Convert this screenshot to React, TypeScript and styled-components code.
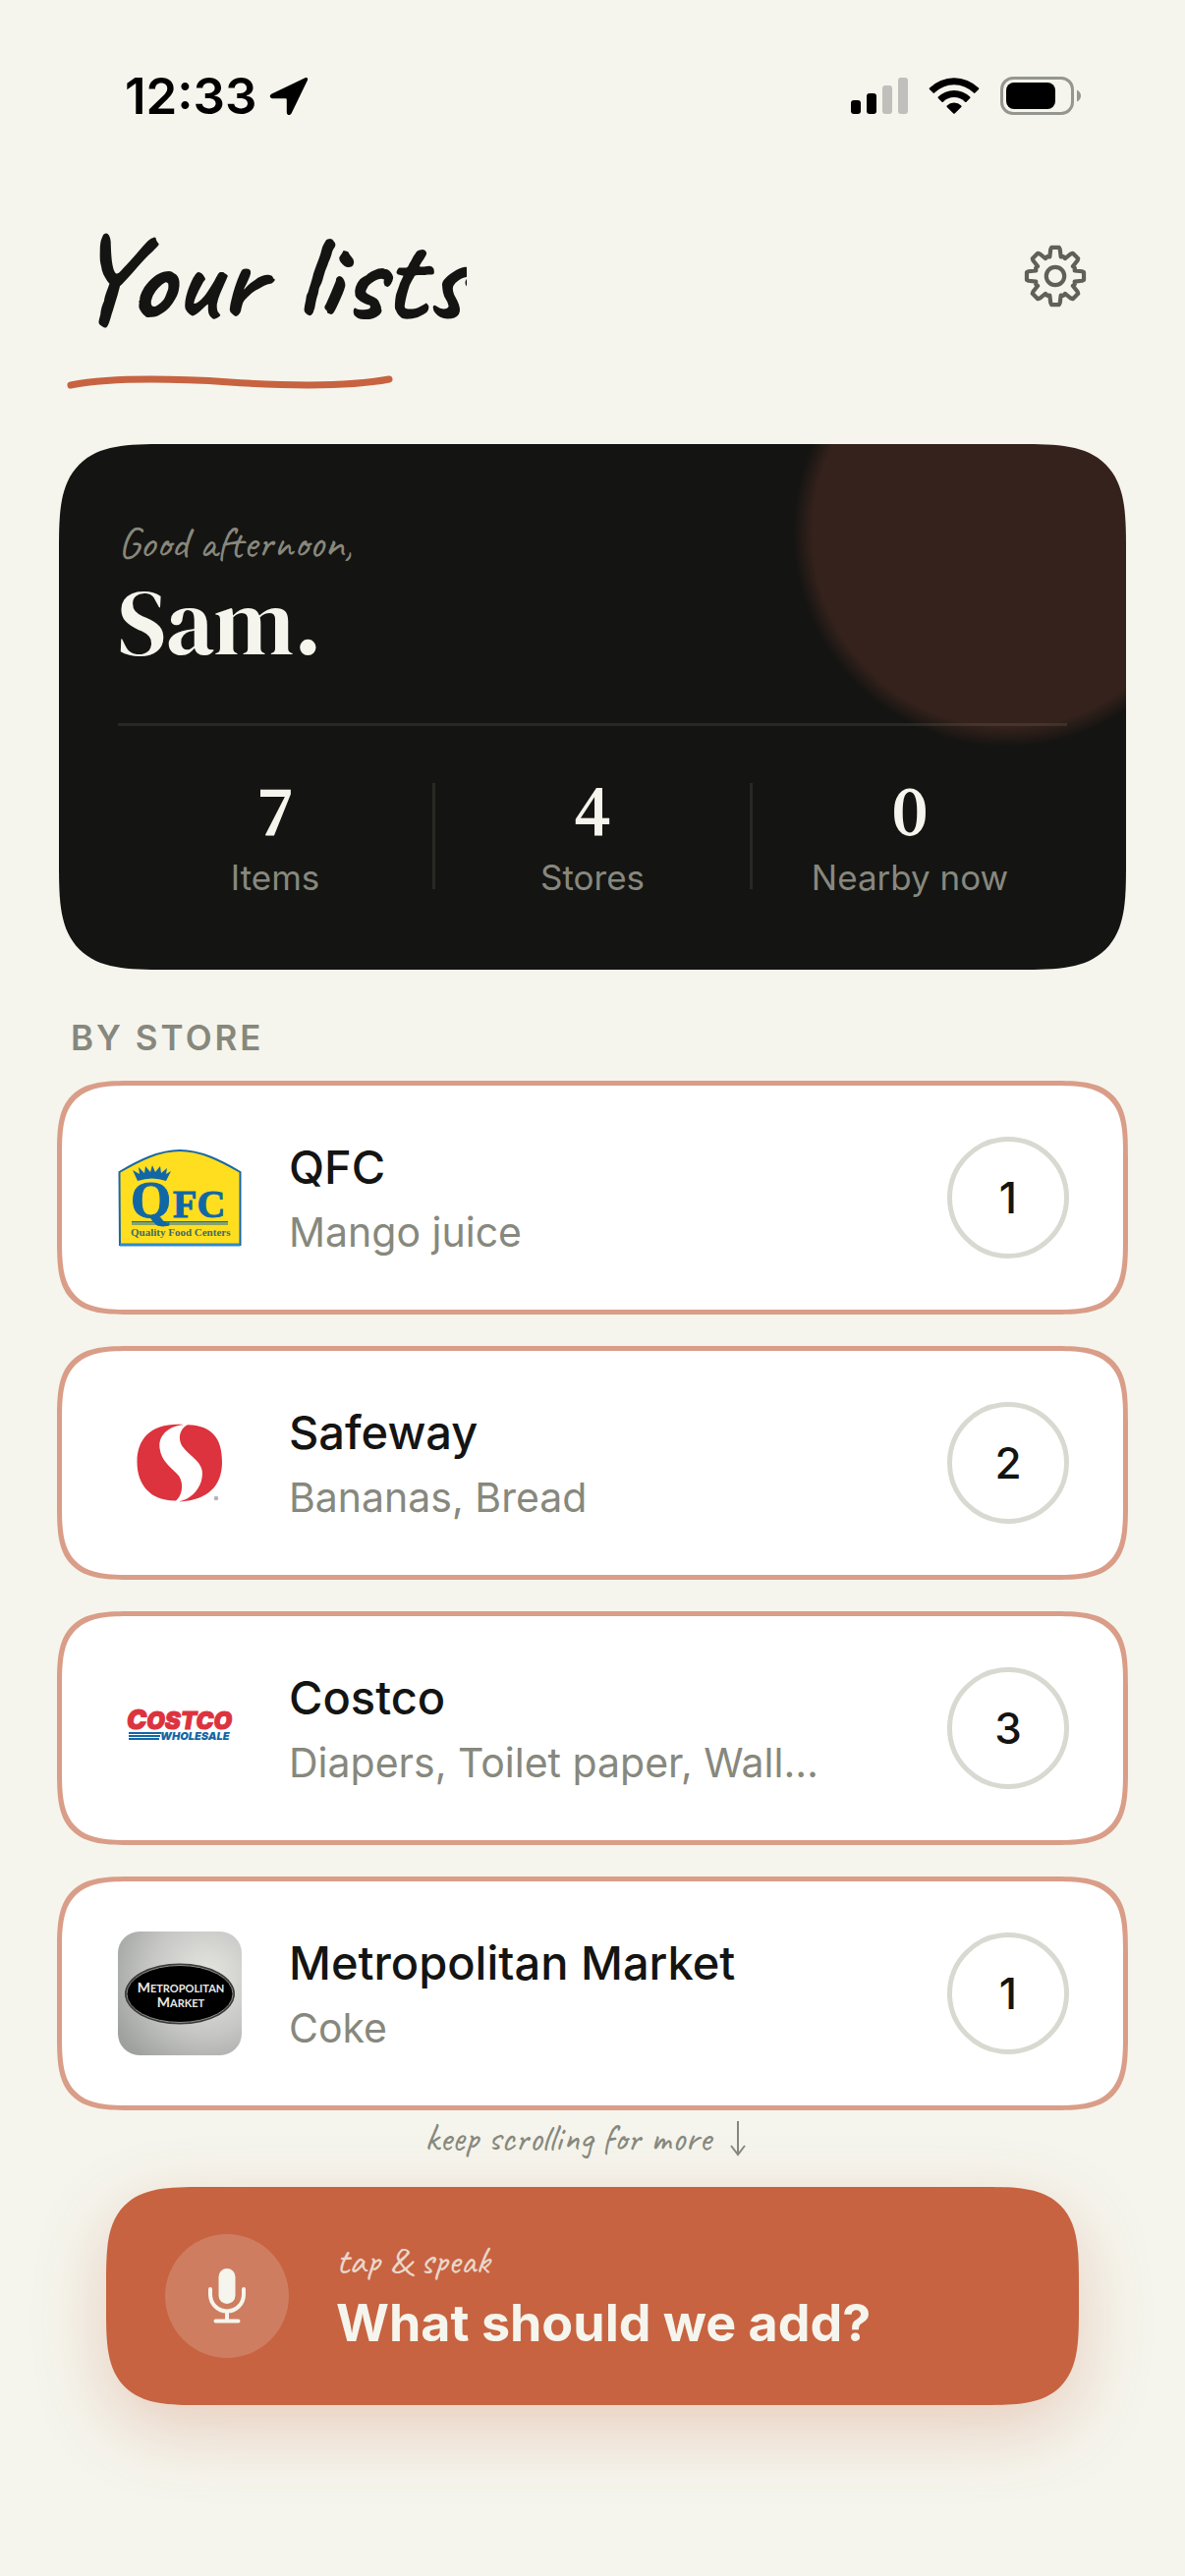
import React from "react";
import styled, { createGlobalStyle, css } from "styled-components";

const color = {
  paper: "#f5f5ed",
  ink: "#141412",
  muted: "#87887d",
  clay: "#c76341",
  clayLine: "#d99d88",
  ring: "#d8d9d0",
};

const sans = `Inter, "Liberation Sans", sans-serif`;
const serif = `"DM Serif Display", "Liberation Serif", serif`;
const numerals = `"New York", "Source Serif 4", "Source Serif Pro", "Noto Serif", "DM Serif Display", serif`;
const hand = `Caveat, Lato, cursive`;

const GlobalStyle = createGlobalStyle`
  *, *::before, *::after { box-sizing: border-box; }
  body { margin: 0; background: ${color.paper}; }
  button { font: inherit; color: inherit; border: 0; background: none; padding: 0; text-align: left; cursor: pointer; }
  h1, h2, h3, p, ul { margin: 0; padding: 0; }
  svg { display: block; flex: none; }
`;

/* Continuous corners where the browser has them, plain round ones elsewhere. */
const smoothCorner = (plain: number, smooth: number) => css`
  border-radius: ${plain}px;
  @supports (corner-shape: superellipse(1.7)) {
    border-radius: ${smooth}px;
    corner-shape: superellipse(1.7);
  }
`;

const Page = styled.div`
  min-height: 100vh;
  background: ${color.paper};
  color: ${color.ink};
  font-family: ${sans};
  display: flex;
  flex-direction: column;
`;

const StatusBar = styled.div`
  display: flex;
  align-items: center;
  justify-content: space-between;
  padding: 67px 106px 0 127px;
  color: #000;
`;

const StatusGroup = styled.div<{ $gap: number }>`
  display: flex;
  align-items: center;
  gap: ${(p) => p.$gap}px;
`;

const Clock = styled.time`
  font-size: 51px;
  font-weight: 600;
  line-height: 62px;
`;

const Main = styled.main`
  padding: 92px 58px 0;
`;

const Header = styled.header`
  display: flex;
  align-items: center;
  justify-content: space-between;
  height: 120px;
  padding: 0 40px 0 16px;
`;

const PageTitle = styled.h1`
  margin-top: 4px;
  font-family: ${hand};
  font-weight: 700;
  font-size: 126px;
  line-height: 120px;
  overflow-x: clip;
`;

const IconButton = styled.button`
  display: grid;
  place-items: center;
  width: 68px;
  height: 68px;
  color: #5f6159;
`;

const Underline = styled.svg`
  margin: 35px 0 0 8px;
`;

const Summary = styled.section`
  margin: 52px 2px 0;
  padding: 77px 60px 70px;
  color: ${color.paper};
  background: radial-gradient(
    circle at calc(100% - 121px) 90px,
    #35221c 198px,
    ${color.ink} 218px
  );
  ${smoothCorner(76, 108)}
`;

const Greeting = styled.p`
  font-family: ${hand};
  font-size: 45px;
  line-height: 48px;
  color: ${color.muted};
`;

const Name = styled.h2`
  margin-top: 2px;
  font-family: ${serif};
  font-weight: 400;
  font-size: 94px;
  line-height: 108px;
`;

const Stats = styled.div`
  display: flex;
  align-items: center;
  margin-top: 49px;
  padding-top: 46px;
  border-top: 3px solid rgba(245, 244, 236, 0.09);
`;

const StatDivider = styled.span`
  width: 3px;
  height: 108px;
  background: rgba(245, 244, 236, 0.09);
`;

const Stat = styled.div`
  flex: 1;
  display: flex;
  flex-direction: column;
  align-items: center;
  gap: 4px;
`;

const StatValue = styled.strong`
  font-family: ${numerals};
  font-weight: 600;
  font-size: 72px;
  line-height: 80px;
`;

const StatLabel = styled.span`
  font-size: 35px;
  line-height: 48px;
  color: ${color.muted};
`;

const SectionTitle = styled.h2`
  margin: 46px 0 21px;
  padding-left: 14px;
  font-size: 35px;
  font-weight: 600;
  line-height: 46px;
  letter-spacing: 3px;
  text-transform: uppercase;
  color: ${color.muted};
`;

const StoreList = styled.ul`
  display: flex;
  flex-direction: column;
  gap: 32px;
  list-style: none;
`;

const StoreCard = styled.button`
  display: flex;
  align-items: center;
  gap: 48px;
  width: 100%;
  height: 238px;
  padding: 0 55px 0 57px;
  background: #fff;
  border: 5px solid ${color.clayLine};
  ${smoothCorner(54, 78)}
`;

const StoreText = styled.span`
  flex: 1;
  min-width: 0;
  padding-top: 4px;
  display: flex;
  flex-direction: column;
`;

const StoreName = styled.span`
  font-size: 47px;
  font-weight: 500;
  line-height: 66px;
`;

const StoreItems = styled.span`
  font-size: 41px;
  line-height: 66px;
  color: ${color.muted};
`;

const Count = styled.span`
  display: grid;
  place-items: center;
  flex: none;
  width: 124px;
  height: 124px;
  border: 5px solid ${color.ring};
  border-radius: 50%;
  font-size: 44px;
  font-weight: 500;
`;

const ScrollHint = styled.p`
  display: flex;
  align-items: center;
  justify-content: center;
  gap: 18px;
  height: 78px;
  padding: 0 14px 20px 0;
  font-family: ${hand};
  font-size: 39px;
  line-height: 40px;
  color: ${color.muted};
`;

const SpeakButton = styled.button`
  display: flex;
  align-items: center;
  gap: 48px;
  width: calc(100% - 100px);
  height: 222px;
  margin: 0 50px;
  padding: 0 60px;
  color: ${color.paper};
  background: ${color.clay};
  box-shadow: 0 24px 72px rgba(199, 99, 65, 0.28);
  ${smoothCorner(68, 98)}
`;

const MicBadge = styled.span`
  display: grid;
  place-items: center;
  flex: none;
  width: 126px;
  height: 126px;
  border-radius: 50%;
  background: rgba(245, 244, 236, 0.18);
`;

const SpeakText = styled.span`
  display: flex;
  flex-direction: column;
  padding-top: 2px;
  gap: 5px;
`;

const SpeakHint = styled.span`
  font-family: ${hand};
  font-size: 39px;
  line-height: 48px;
  opacity: 0.8;
`;

const SpeakPrompt = styled.span`
  font-size: 52px;
  font-weight: 700;
  line-height: 68px;
`;

const LocationArrow = () => (
  <svg width="40" height="40" viewBox="0 0 40 40" aria-hidden="true">
    <path
      d="M36.5 1.2 2.6 17.4C-.3 18.8.4 22.2 3.6 22.2H16.6Q17.8 22.2 17.8 23.4V36.2C17.8 39.6 21.4 40 22.8 37L38.9 3.8C39.9 1.7 38.3.3 36.5 1.2Z"
      fill="currentColor"
    />
  </svg>
);

const Signal = () => (
  <svg width="58" height="38" viewBox="0 0 58 38" aria-hidden="true">
    <rect x="0" y="23" width="10" height="14" rx="3" />
    <rect x="16" y="16" width="10" height="21" rx="3" />
    <rect x="32" y="8" width="10" height="29" rx="3" fill="#bfbfbc" />
    <rect x="48" y="0" width="10" height="37" rx="3" fill="#bfbfbc" />
  </svg>
);

const Wifi = () => (
  <svg width="52" height="38" viewBox="0 0 52 38" aria-hidden="true">
    <path d="M1 10.6a35.5 35.5 0 0 1 50 0q.7.7 0 1.4l-3.600 3.600q-.7.7-1.400 0a28.300 28.300 0 0 0-40 0q-.7.7-1.400 0L1 12q-.7-.7 0-1.400Z" />
    <path d="M9.800 19.600a23 23 0 0 1 32.400 0q.7.700 0 1.400l-3.700 3.700q-.7.700-1.400 0a15.700 15.700 0 0 0-22.200 0q-.7.700-1.400 0l-3.700-3.700q-.7-.700 0-1.400Z" />
    <path d="M18.700 28.500a10.400 10.400 0 0 1 14.600 0q.7.700 0 1.400l-6.600 6.600q-.7.700-1.400 0l-6.600-6.600q-.7-.700 0-1.400Z" />
  </svg>
);

const Battery = () => (
  <svg width="82" height="40" viewBox="0 0 82 40" aria-hidden="true">
    <rect x="1.5" y="1.5" width="72" height="36" rx="11.5" fill="none" stroke="#95968f" strokeWidth="3" />
    <rect x="6" y="6" width="50" height="27" rx="8" />
    <path d="M78 13.500q4 2 4 6t-4 6Z" fill="#95968f" />
  </svg>
);

/* One tooth runs from the valley out to a chamfered tip, repeated round the hub. */
const gearOutline = (() => {
  const teeth = 8;
  const points: string[] = [];
  const profile: [number, number][] = [
    [-22.5, 21.5],
    [-16, 20.5],
    [-10, 27.5],
    [-7.5, 29.3],
    [7.5, 29.3],
    [10, 27.5],
    [16, 20.5],
  ];
  for (let i = 0; i < teeth; i++) {
    profile.forEach(([offset, radius]) => {
      const a = ((i * 45 + offset - 90) * Math.PI) / 180;
      points.push(`${(34 + radius * Math.cos(a)).toFixed(2)} ${(34 + radius * Math.sin(a)).toFixed(2)}`);
    });
  }
  return `M${points.join("L")}Z`;
})();

const Gear = () => (
  <svg width="68" height="68" viewBox="0 0 68 68" fill="none" stroke="currentColor" strokeWidth="4.2" strokeLinejoin="round" aria-hidden="true">
    <path d={gearOutline} />
    <circle cx="34" cy="34" r="9.2" />
  </svg>
);

const Mic = () => (
  <svg width="40" height="58" viewBox="0 0 40 58" aria-hidden="true">
    <rect x="11.5" y="1" width="17" height="36" rx="8.5" fill="currentColor" />
    <path d="M3 22v5.500a17 17 0 0 0 34 0V22M20 45v9M8.500 54.500h23" fill="none" stroke="currentColor" strokeWidth="4" strokeLinecap="round" />
  </svg>
);

const DownArrow = () => (
  <svg width="18" height="36" viewBox="0 0 18 36" fill="none" stroke="currentColor" strokeWidth="2" aria-hidden="true">
    <path d="M9 0V34M2 25l7 9 7-9" />
  </svg>
);

const QfcLogo = () => (
  <svg width="126" height="126" viewBox="0 0 126 126" role="img" aria-label="QFC logo">
    <path d="M1.500 37C22 25 42 15 63 15S104 25 124.500 37V111H2Z" fill="#ffde1f" stroke="#1b68a0" strokeWidth="2" />
    <path d="M2 111h122" stroke="#2f8ac9" strokeWidth="3" />
    <g fill="#1167a6">
      <path d="M20 46 15 35l7 4-1-7 6 6 1-7 5 6 2-7 3 7 5-6 1 7 6-5-1 6 5-3-5 10Q35 41 20 46Z" />
      <g fontFamily="Liberation Serif, serif" fontWeight="700" stroke="#1167a6" strokeWidth="1">
        <text x="13" y="83" fontSize="53">Q</text>
        <text x="56" y="83" fontSize="40">FC</text>
      </g>
      <text x="13" y="102" fontSize="11" fontWeight="700" fill="#3c6a6c" fontFamily="Liberation Serif, serif">Quality Food Centers</text>
      <path d="M14 87h98v1.500H14Zm0 2.500h98v1H14Z" />
    </g>
  </svg>
);

const SafewayLogo = () => (
  <svg width="126" height="126" viewBox="0 0 126 126" role="img" aria-label="Safeway logo">
    <g fill="#dc333e">
      <path d="M67 24C34 22 19.500 38 19.500 62S34 102 59 101.500C67 95 67 80 60 74 52 66 44 60 42.500 48 41 36 50 26 67 24Z" />
      <path d="M71 24.200C96 25 106 38 106 62 106 88 90 101.500 61 102.500 78 100 88 84 85.500 70 83 60 72 55 65.500 46 60.500 38 63 28 71 24.200Z" />
    </g>
    <circle cx="100" cy="99" r="2.3" fill="#b5b5b5" />
  </svg>
);

const CostcoLogo = () => (
  <svg width="126" height="126" viewBox="0 0 126 126" role="img" aria-label="Costco Wholesale logo">
    <g fontFamily="Inter, sans-serif" fontWeight="900" fontStyle="italic">
      <text x="9" y="64" fontSize="24" fill="#dc333e" stroke="#dc333e" strokeWidth="1">
        <tspan fontSize="27">C</tspan>OSTCO
      </text>
      <text x="43" y="75" fontSize="11" fill="#1167a6">WHOLESALE</text>
    </g>
    <path d="M11 67h33v2H11Zm0 3h32v2H11Zm0 3h31v2H11Z" fill="#1167a6" />
  </svg>
);

const MetropolitanLogo = () => (
  <svg width="126" height="126" viewBox="0 0 126 126" role="img" aria-label="Metropolitan Market logo">
    <defs>
      <radialGradient id="steel" cx="0.72" cy="0.36" r="0.85">
        <stop offset="0" stopColor="#e6e6e0" />
        <stop offset="0.55" stopColor="#c6c7c5" />
        <stop offset="1" stopColor="#9fa19e" />
      </radialGradient>
    </defs>
    <rect width="126" height="126" rx="22" fill="url(#steel)" />
    <ellipse cx="63" cy="63.5" rx="56" ry="31" fill="#3a3a38" />
    <ellipse cx="63" cy="63.5" rx="54" ry="29" fill="#000" stroke="#8d8f8a" strokeWidth="1" />
    <g fill="#e8e8e4" fontFamily="Lato, sans-serif" fontWeight="700" textAnchor="middle">
      <text x="64" y="62" fontSize="11">
        <tspan fontSize="14">M</tspan>ETROPOLITAN
      </text>
      <text x="64" y="77" fontSize="11">
        <tspan fontSize="14">M</tspan>ARKET
      </text>
    </g>
  </svg>
);

const stats = [
  { label: "Items", value: 7 },
  { label: "Stores", value: 4 },
  { label: "Nearby now", value: 0 },
];

const stores = [
  { name: "QFC", items: "Mango juice", count: 1, Logo: QfcLogo },
  { name: "Safeway", items: "Bananas, Bread", count: 2, Logo: SafewayLogo },
  { name: "Costco", items: "Diapers, Toilet paper, Wall…", count: 3, Logo: CostcoLogo },
  { name: "Metropolitan Market", items: "Coke", count: 1, Logo: MetropolitanLogo },
];

export default function App() {
  return (
    <Page>
      <GlobalStyle />
      <StatusBar>
        <StatusGroup $gap={12}>
          <Clock>12:33</Clock>
          <LocationArrow />
        </StatusGroup>
        <StatusGroup $gap={21}>
          <Signal />
          <Wifi />
          <Battery />
        </StatusGroup>
      </StatusBar>
      <Main>
        <Header>
          <PageTitle>Your lists</PageTitle>
          <IconButton aria-label="Settings">
            <Gear />
          </IconButton>
        </Header>
        <Underline width="336" height="24" viewBox="0 0 336 24" aria-hidden="true">
          <path d="M6 16Q59 6 168 13T330 10" fill="none" stroke={color.clay} strokeWidth="7" strokeLinecap="round" />
        </Underline>
        <Summary>
          <Greeting>Good afternoon,</Greeting>
          <Name>Sam.</Name>
          <Stats>
            {stats.map((s, i) => (
              <React.Fragment key={s.label}>
                {i > 0 && <StatDivider />}
                <Stat>
                  <StatValue>{s.value}</StatValue>
                  <StatLabel>{s.label}</StatLabel>
                </Stat>
              </React.Fragment>
            ))}
          </Stats>
        </Summary>
        <SectionTitle>By store</SectionTitle>
        <StoreList>
          {stores.map(({ name, items, count, Logo }) => (
            <li key={name}>
              <StoreCard>
                <Logo />
                <StoreText>
                  <StoreName>{name}</StoreName>
                  <StoreItems>{items}</StoreItems>
                </StoreText>
                <Count>{count}</Count>
              </StoreCard>
            </li>
          ))}
        </StoreList>
        <ScrollHint>
          keep scrolling for more
          <DownArrow />
        </ScrollHint>
        <SpeakButton>
          <MicBadge>
            <Mic />
          </MicBadge>
          <SpeakText>
            <SpeakHint>tap &amp; speak</SpeakHint>
            <SpeakPrompt>What should we add?</SpeakPrompt>
          </SpeakText>
        </SpeakButton>
      </Main>
    </Page>
  );
}
